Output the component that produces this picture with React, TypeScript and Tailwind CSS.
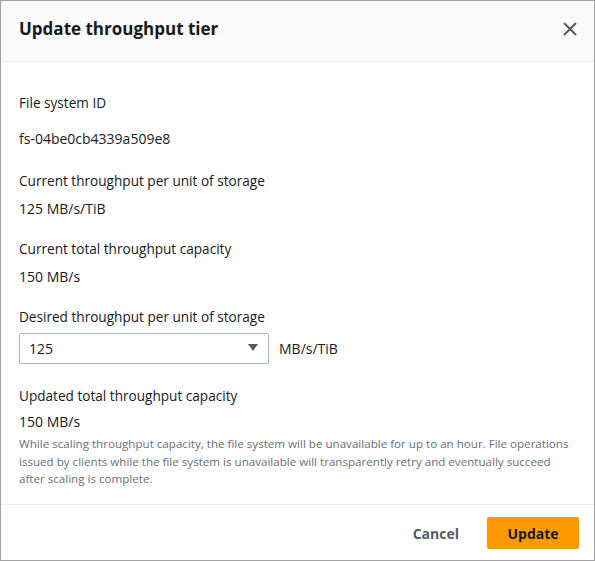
import React, { useState } from 'react';

const Field: React.FC<{ label: string; value: string; className?: string; gap?: string }> = ({ label, value, className = '', gap = 'mt-2' }) => (
  <div className={className}>
    <div className="text-[13.6px] leading-5 text-[#16191f]">{label}</div>
    <div className={`text-[14px] leading-5 text-[#16191f] ${gap}`}>{value}</div>
  </div>
);

export default function App() {
  const [tier, setTier] = useState('125');

  return (
    <div className="w-[595px] h-[561px] bg-white border border-[#a3a3a3] flex flex-col overflow-hidden" style={{ fontFamily: '"Open Sans", Roboto, sans-serif' }}>
      {/* Header */}
      <div className="h-[61px] shrink-0 bg-[#fafafa] border-b border-[#eaeded] flex items-center justify-between pl-[18px] pr-[12px] pb-[5px]">
        <h2 className="text-[17px] font-bold text-[#16191f] leading-6">Update throughput tier</h2>
        <button className="w-6 h-6 flex items-center justify-center text-[#545b64]">
          <svg width="16" height="16" viewBox="0 0 16 16" fill="none" stroke="currentColor" strokeWidth="2">
            <path d="M2 2l12 12M14 2L2 14" />
          </svg>
        </button>
      </div>

      {/* Body */}
      <div className="flex-1 pl-[18px] pr-[20px] pt-[31px]">
        <Field label="File system ID" value="fs-04be0cb4339a509e8" gap="mt-4" />
        <Field label="Current throughput per unit of storage" value="125 MB/s/TiB" className="mt-[22px]" />
        <Field label="Current total throughput capacity" value="150 MB/s" className="mt-5" />

        <div className="mt-5">
          <div className="text-[13.6px] leading-5 text-[#16191f]">Desired throughput per unit of storage</div>
          <div className="mt-[6px] flex items-center gap-[10px]">
            <div className="relative w-[250px] h-[31px]">
              <select
                value={tier}
                onChange={e => setTier(e.target.value)}
                className="appearance-none w-full h-full border border-[#aab7b8] rounded-[2px] bg-white pl-[9px] pr-8 text-[14px] text-[#16191f] outline-none"
              >
                <option value="125">125</option>
                <option value="250">250</option>
                <option value="500">500</option>
                <option value="1000">1000</option>
              </select>
              <svg className="absolute right-[11px] top-[11px] pointer-events-none" width="10" height="8" viewBox="0 0 10 8">
                <path d="M0 0h10L5 7z" fill="#545b64" />
              </svg>
            </div>
            <span className="text-[14px] text-[#16191f]">MB/s/TiB</span>
          </div>
        </div>

        <Field label="Updated total throughput capacity" value="150 MB/s" className="mt-[22px]" gap="mt-[6px]" />
        <p className="text-[11.6px] leading-[17.5px] text-[#687078] mt-[3px]">
          While scaling throughput capacity, the file system will be unavailable for up to an hour. File operations issued by clients while the file system is unavailable will transparently retry and eventually succeed after scaling is complete.
        </p>
      </div>

      {/* Footer */}
      <div className="h-[56px] shrink-0 border-t border-[#eaeded] flex items-start justify-end gap-[28px] pr-[15px] pt-[12px]">
        <button className="h-[32px] text-[14px] font-bold text-[#545b64]">Cancel</button>
        <button className="h-[32px] w-[92px] bg-[#ff9900] rounded-[2px] text-[14px] font-bold text-[#16191f]">Update</button>
      </div>
    </div>
  );
}
